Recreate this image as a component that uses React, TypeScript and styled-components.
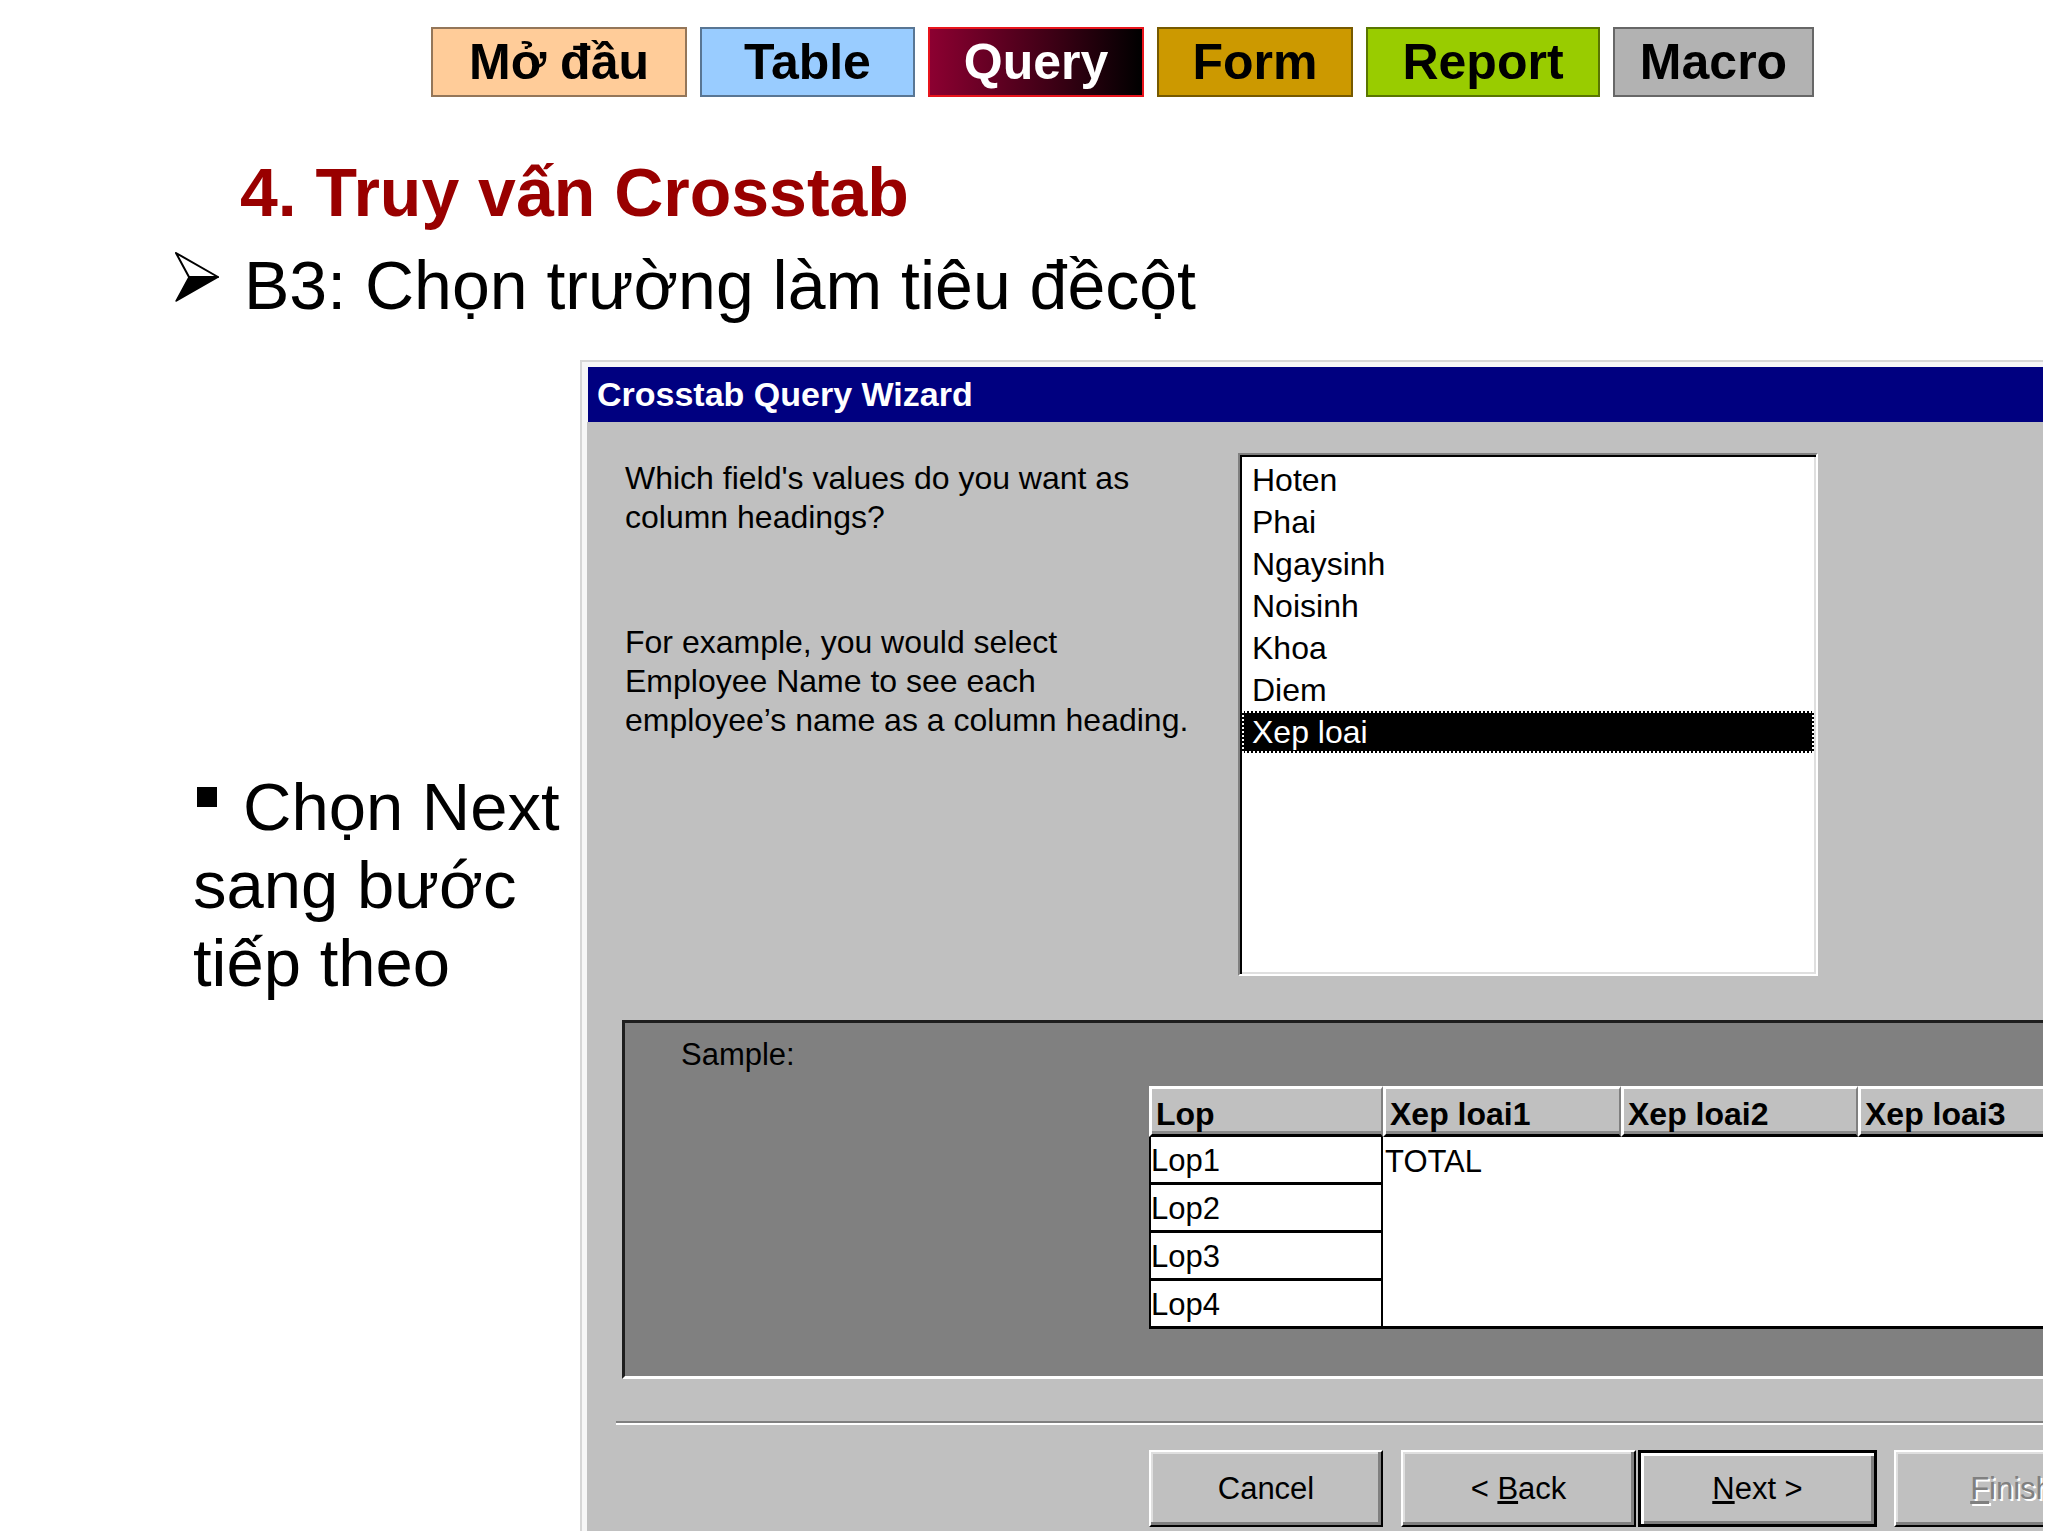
import styled, { createGlobalStyle } from 'styled-components';

const GlobalStyle = createGlobalStyle`
  html, body {
    margin: 0;
    padding: 0;
    background: #fff;
  }
  body {
    font-family: 'Liberation Sans', Arial, sans-serif;
  }
`;

const Slide = styled.div`
  width: 2048px;
  height: 1536px;
  overflow: hidden;
  display: flex;
  flex-direction: column;
  background: #fff;
`;

const NavBar = styled.nav`
  display: flex;
  gap: 13px;
  padding: 27px 0 0 431px;
`;

const NavTab = styled.div<{ $w: number; $bg: string; $active?: boolean }>`
  width: ${(p) => p.$w}px;
  height: 70px;
  box-sizing: border-box;
  display: flex;
  align-items: center;
  justify-content: center;
  background: ${(p) => p.$bg};
  border: 2px solid ${(p) => (p.$active ? '#e8141c' : 'rgba(0, 0, 0, 0.42)')};
  color: ${(p) => (p.$active ? '#fff' : '#000')};
  font-weight: bold;
  font-size: 50px;
  line-height: 1;
`;

const Title = styled.h1`
  margin: 56px 0 0 240px;
  font-size: 68px;
  line-height: 78px;
  font-weight: bold;
  color: #990000;
`;

const StepRow = styled.div`
  display: flex;
  align-items: flex-start;
  margin: 15px 0 0 175px;
`;

const StepText = styled.div`
  font-size: 68px;
  line-height: 78px;
  color: #000;
  margin-left: 25px;
`;

const ArrowIcon = styled.svg`
  flex: none;
  margin-top: 6px;
`;

const Content = styled.div`
  display: flex;
  margin-top: 36px;
`;

const SideNote = styled.div`
  width: 580px;
  flex: none;
  box-sizing: border-box;
  padding: 408px 0 0 193px;
  font-size: 67px;
  line-height: 78px;
  color: #000;
`;

const Square = styled.span`
  display: inline-block;
  width: 20px;
  height: 20px;
  background: #000;
  margin: 0 26px 0 4px;
  vertical-align: 23px;
`;

const Window = styled.div`
  width: 1463px;
  height: 1171px;
  flex: none;
  box-sizing: border-box;
  border-top: 2px solid #d6d6d6;
  border-left: 2px solid #d6d6d6;
  background: #f6f6f6;
  padding: 5px 0 0 6px;
  overflow: hidden;
  display: flex;
  flex-direction: column;
`;

const TitleBar = styled.div`
  height: 55px;
  flex: none;
  background: #000080;
  color: #fff;
  font-weight: bold;
  font-size: 34px;
  display: flex;
  align-items: center;
  padding-left: 9px;
`;

const WindowBody = styled.div`
  flex: 1;
  margin-left: -1px;
  background: #c0c0c0;
  padding-top: 31px;
  display: flex;
  flex-direction: column;
  font-size: 32px;
  color: #000;
`;

const TopSection = styled.div`
  display: flex;
  padding-left: 38px;
`;

const Prompt = styled.div`
  width: 613px;
  flex: none;
  padding-top: 6px;
`;

const Para = styled.p<{ $gap?: number }>`
  margin: ${(p) => p.$gap ?? 0}px 0 0;
  line-height: 39px;
`;

const ListBox = styled.div`
  width: 580px;
  height: 523px;
  box-sizing: border-box;
  flex: none;
  background: #fff;
  border: 2px solid;
  border-color: #808080 #fff #fff #808080;
  box-shadow: inset 2px 2px #000, inset -2px -2px #dfdfdf;
  padding: 4px 2px 2px;
`;

const ListItem = styled.div<{ $selected?: boolean }>`
  height: 42px;
  line-height: 42px;
  padding-left: 10px;
  background: ${(p) => (p.$selected ? '#000' : 'transparent')};
  color: ${(p) => (p.$selected ? '#fff' : '#000')};
  outline: ${(p) => (p.$selected ? '2px dotted #fff' : 'none')};
  outline-offset: -2px;
`;

const SamplePanel = styled.div`
  width: 1500px;
  height: 359px;
  box-sizing: border-box;
  margin: 44px 0 0 35px;
  background: #808080;
  border-top: 3px solid #1e1e1e;
  border-left: 3px solid #1e1e1e;
  border-bottom: 3px solid #fff;
  padding: 12px 0 0 56px;
  font-size: 31px;
`;

const SampleLabel = styled.div`
  line-height: 39px;
`;

const Crosstab = styled.div`
  display: grid;
  grid-template-columns: 234px 238px 237px 237px;
  grid-template-rows: 51px repeat(4, 48px);
  margin: 12px 0 0 468px;
  width: 946px;
`;

const HeadCell = styled.div`
  box-sizing: border-box;
  background: #c0c0c0;
  border-top: 3px solid #fff;
  border-left: 3px solid #fff;
  border-right: 2px solid #808080;
  border-bottom: 3px solid #000;
  box-shadow: inset 0 -3px #8a8a8a;
  font-weight: bold;
  font-size: 32px;
  padding: 6px 0 0 4px;
  line-height: 38px;
`;

const RowCell = styled.div`
  box-sizing: border-box;
  background: #fff;
  border-left: 2px solid #000;
  border-right: 2px solid #000;
  border-bottom: 3px solid #000;
  display: flex;
  align-items: center;
  padding-top: 3px;
`;

const DataArea = styled.div`
  grid-column: 2 / span 3;
  grid-row: 2 / span 4;
  background: #fff;
  border-bottom: 3px solid #000;
  padding: 2px 0 0 2px;
  line-height: 46px;
`;

const Divider = styled.div`
  height: 2px;
  margin: 42px 0 0 29px;
  background: #808080;
  border-bottom: 2px solid #fff;
`;

const ButtonRow = styled.div`
  display: flex;
  margin-top: 25px;
  padding-left: 562px;
`;

const WinButton = styled.div<{ $w: number; $gap: number; $default?: boolean; $disabled?: boolean }>`
  width: ${(p) => p.$w}px;
  height: 77px;
  flex: none;
  box-sizing: border-box;
  margin-right: ${(p) => p.$gap}px;
  background: #c0c0c0;
  border: ${(p) => (p.$default ? '3px solid #000' : '2px solid')};
  border-color: ${(p) => (p.$default ? '#000' : '#fff #000 #000 #fff')};
  box-shadow: ${(p) =>
    p.$default
      ? 'inset 3px 3px #fff, inset -3px -3px #808080'
      : 'inset -3px -3px #808080, inset 2px 2px #dfdfdf'};
  display: flex;
  align-items: center;
  justify-content: center;
  font-size: 31px;
  color: ${(p) => (p.$disabled ? '#808080' : '#000')};
  text-shadow: ${(p) => (p.$disabled ? '2px 2px #fff' : 'none')};
`;

const tabs = [
  { label: 'Mở đầu', w: 256, bg: '#ffcc99' },
  { label: 'Table', w: 215, bg: '#99ccff' },
  { label: 'Query', w: 216, bg: 'linear-gradient(90deg, #8c0031 0%, #3a0014 60%, #000 100%)', active: true },
  { label: 'Form', w: 196, bg: '#cc9900' },
  { label: 'Report', w: 234, bg: '#99cc00' },
  { label: 'Macro', w: 201, bg: '#b2b2b2' },
];

const fields = ['Hoten', 'Phai', 'Ngaysinh', 'Noisinh', 'Khoa', 'Diem', 'Xep loai'];

export default function App() {
  return (
    <Slide>
      <GlobalStyle />
      <NavBar>
        {tabs.map((t) => (
          <NavTab key={t.label} $w={t.w} $bg={t.bg} $active={t.active}>
            {t.label}
          </NavTab>
        ))}
      </NavBar>

      <Title>4. Truy vấn Crosstab</Title>

      <StepRow>
        <ArrowIcon width="44" height="50" viewBox="0 0 44 50">
          <polygon points="14,25 43,25 1,49" fill="#000" stroke="#000" strokeWidth="1.5" strokeLinejoin="round" />
          <polygon points="1,1 43,25 14,25" fill="#fff" stroke="#000" strokeWidth="2" strokeLinejoin="round" />
        </ArrowIcon>
        <StepText>B3: Chọn trường làm tiêu đềcột</StepText>
      </StepRow>

      <Content>
        <SideNote>
          <Square />
          Chọn Next
          <br />
          sang bước
          <br />
          tiếp theo
        </SideNote>

        <Window>
          <TitleBar>Crosstab Query Wizard</TitleBar>
          <WindowBody>
            <TopSection>
              <Prompt>
                <Para>
                  Which field's values do you want as
                  <br />
                  column headings?
                </Para>
                <Para $gap={86}>
                  For example, you would select
                  <br />
                  Employee Name to see each
                  <br />
                  employee’s name as a column heading.
                </Para>
              </Prompt>
              <ListBox>
                {fields.map((f) => (
                  <ListItem key={f} $selected={f === 'Xep loai'}>
                    {f}
                  </ListItem>
                ))}
              </ListBox>
            </TopSection>

            <SamplePanel>
              <SampleLabel>Sample:</SampleLabel>
              <Crosstab>
                <HeadCell>Lop</HeadCell>
                <HeadCell>Xep loai1</HeadCell>
                <HeadCell>Xep loai2</HeadCell>
                <HeadCell>Xep loai3</HeadCell>
                {['Lop1', 'Lop2', 'Lop3', 'Lop4'].map((r) => (
                  <RowCell key={r}>{r}</RowCell>
                ))}
                <DataArea>TOTAL</DataArea>
              </Crosstab>
            </SamplePanel>

            <Divider />

            <ButtonRow>
              <WinButton $w={234} $gap={18}>Cancel</WinButton>
              <WinButton $w={235} $gap={2}>
                &lt;&nbsp;<u>B</u>ack
              </WinButton>
              <WinButton $w={239} $gap={17} $default>
                <u>N</u>ext&nbsp;&gt;
              </WinButton>
              <WinButton $w={235} $gap={0} $disabled>
                <u>F</u>inish
              </WinButton>
            </ButtonRow>
          </WindowBody>
        </Window>
      </Content>
    </Slide>
  );
}
